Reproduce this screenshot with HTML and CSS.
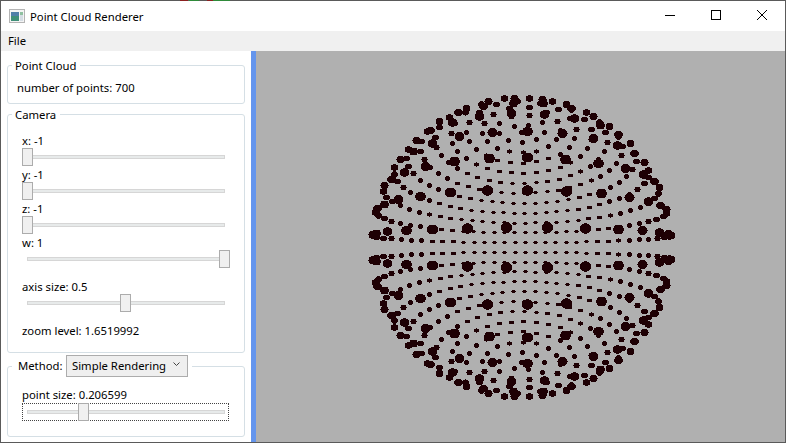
FILE: index.html
```html
<!DOCTYPE html>
<html lang="en">
<head>
    <meta charset="UTF-8">
    <title>Point Cloud Renderer</title>
    <link rel="stylesheet" href="styles.css">
</head>
<body>
    <div class="window">
        <div class="titlebar">
            <svg class="app-icon" width="16" height="14" viewBox="0 0 16 14">
                <rect x="0.5" y="0.5" width="15" height="13" fill="#f4f4f4" stroke="#b4b4b4"/>
                <rect x="2" y="3" width="8" height="9" fill="#3f8f78"/>
                <rect x="2" y="3" width="8" height="4" fill="#4f7fa8"/>
                <rect x="11" y="3" width="3" height="3" fill="#8fc0a0"/>
                <rect x="11" y="6" width="3" height="6" fill="#d5dde4"/>
            </svg>
            <span class="title">Point Cloud Renderer</span>
            <div class="caption-buttons">
                <svg width="46" height="30" viewBox="0 0 46 30"><path d="M18 14.5h10" stroke="#000" fill="none"/></svg>
                <svg width="46" height="30" viewBox="0 0 46 30"><rect x="18.5" y="9.5" width="9" height="9" stroke="#000" fill="none"/></svg>
                <svg width="46" height="30" viewBox="0 0 46 30"><path d="M18 9l10 10M28 9l-10 10" stroke="#000" fill="none"/></svg>
            </div>
        </div>
        <div class="menubar"><span>File</span></div>
        <div class="main">
            <aside class="sidebar">
                <fieldset class="group group-cloud">
                    <legend>Point Cloud</legend>
                    <div class="points-label">number of points: 700</div>
                </fieldset>
                <fieldset class="group group-camera">
                    <legend>Camera</legend>
                    <div class="label label-first">x: -1</div>
                    <div class="slider"><div class="track"></div><div class="thumb" style="left: 0px"></div></div>
                    <div class="label">y: -1</div>
                    <div class="slider"><div class="track"></div><div class="thumb" style="left: 0px"></div></div>
                    <div class="label">z: -1</div>
                    <div class="slider"><div class="track"></div><div class="thumb" style="left: 0px"></div></div>
                    <div class="label">w: 1</div>
                    <div class="slider"><div class="track"></div><div class="thumb" style="left: 197px"></div></div>
                    <div class="label label-gap">axis size: 0.5</div>
                    <div class="slider"><div class="track"></div><div class="thumb" style="left: 98px"></div></div>
                    <div class="label label-gap">zoom level: 1.6519992</div>
                </fieldset>
                <fieldset class="group group-method">
                    <legend>
                        <span class="method-label">Method:</span>
                        <span class="combo">Simple Rendering
                            <svg width="7" height="5" viewBox="0 0 7 5"><path d="M0.5 0.5l3 3 3-3" stroke="#444" fill="none"/></svg>
                        </span>
                    </legend>
                    <div class="label">point size: 0.206599</div>
                    <div class="slider focused"><div class="track"></div><div class="thumb" style="left: 56px"></div></div>
                </fieldset>
            </aside>
            <div class="splitter"></div>
            <canvas id="view" class="view" width="529" height="391"></canvas>
        </div>
    </div>
    <script src="script.js"></script>
</body>
</html>
```

FILE: styles.css
```css
* {
    box-sizing: border-box;
}
html, body {
    margin: 0;
    height: 100%;
}
body {
    font-family: "Noto Sans", Arial, sans-serif;
    font-size: 11.3px;
    color: #000;
    overflow: hidden;
}
.window {
    position: relative;
    width: 786px;
    height: 443px;
    border: 1px solid #5a5a5a;
    display: flex;
    flex-direction: column;
    background-color: #fff;
}
/* bits of the window behind showing on the top edge */
.window::before {
    content: "";
    position: absolute;
    top: -1px;
    left: 179px;
    width: 50px;
    height: 1px;
    background: linear-gradient(to right,
        #8a2020 0 8px, #5a5a5a 8px 9px, #2f8a3a 9px 19px, #5a5a5a 19px 27px,
        #8a2020 27px 33px, #2f8a3a 33px 50px);
}
.titlebar {
    height: 30px;
    display: flex;
    align-items: center;
    padding-left: 8px;
}
.app-icon {
    margin-right: 5px;
}
.caption-buttons {
    margin-left: auto;
    display: flex;
}
.caption-buttons svg {
    display: block;
}
.menubar {
    height: 20px;
    line-height: 20px;
    padding-left: 7px;
    background-color: #f0f0f0;
}
.main {
    flex: 1;
    display: flex;
    min-height: 0;
}
.sidebar {
    width: 250px;
    padding: 6px 6px 0;
}
.splitter {
    width: 5px;
    background-color: #6495ed;
}
.view {
    display: block;
    flex: 1;
    min-width: 0;
    background-color: #b0b0b0;
}
.group {
    margin: 0;
    border: 1px solid #d5dfe5;
    border-radius: 3px;
    padding: 0 14px;
    min-width: 0;
}
.group legend {
    height: 16px;
    padding: 0 4px 0 3px;
    margin-left: -10px;
    line-height: 18px;
}
.group-cloud {
    height: 47px;
}
.points-label {
    margin-left: -5px;
    line-height: 15px;
    margin-top: 7px;
}
.group-camera {
    height: 247px;
    margin-top: 2px;
}
.label {
    line-height: 15px;
    margin-top: 1px;
}
.label-first,
.label-gap {
    margin-top: 11px;
}
.slider {
    position: relative;
    height: 18px;
    width: 207px;
}
.track {
    position: absolute;
    left: 5px;
    right: 4px;
    top: 7px;
    height: 4px;
    background-color: #e7eaea;
    border: 1px solid #d6d6d6;
}
.thumb {
    position: absolute;
    top: 0;
    width: 11px;
    height: 18px;
    background-color: #f0f0f0;
    border: 1px solid #acacac;
}
.group-method {
    height: 82px;
    margin-top: 2px;
}
.group-method legend {
    display: flex;
    align-items: center;
    height: 22px;
    padding: 0 4px 0 6px;
    line-height: 22px;
}
.method-label {
    width: 45px;
}
.combo {
    display: flex;
    align-items: center;
    justify-content: space-between;
    width: 122px;
    height: 22px;
    margin-left: 3px;
    padding: 0 7px 0 5px;
    background-color: #efefef;
    border: 1px solid #acacac;
}
.combo svg {
    margin-bottom: 4px;
}
.group-method .label {
    margin-top: 10px;
    margin-bottom: 1px;
}
.focused {
    outline: 1px dotted #444;
    outline-offset: -1px;
}
```

FILE: script.js
```js
// 700 points spread evenly on a unit sphere (rings of equal spacing),
// seen in perspective from just outside, near points are drawn bigger
const canvas = document.getElementById('view');
const ctx = canvas.getContext('2d');

const centerX = 265;
const centerY = 196;
const camDist = 1.65;
const focal = 197;
const rotY = 0.05;

// scanline circle, no anti-aliasing like the original GL points
function dot(x, y, r) {
    const cx = Math.round(x);
    const cy = Math.round(y);
    const ri = Math.ceil(r);
    for (let dy = -ri; dy <= ri; dy++) {
        const half = r * r - dy * dy;
        if (half < 0) continue;
        const w = Math.round(Math.sqrt(half));
        ctx.fillRect(cx - w, cy + dy, w * 2 + 1, 1);
    }
}

function drawPoint(px, py, pz) {
    const x = px * Math.cos(rotY) + pz * Math.sin(rotY);
    const z = -px * Math.sin(rotY) + pz * Math.cos(rotY);
    const depth = camDist + z;
    dot(centerX + focal * x / depth, centerY + focal * py / depth, 0.4 + 3.19 / depth);
}

ctx.fillStyle = '#1e0004';
const area = 4 * Math.PI / 700;
const rings = 24;
const stepTheta = Math.PI / rings;
const stepPhi = area / stepTheta;
for (let m = 0; m < rings; m++) {
    const theta = Math.PI * (m + 0.5) / rings;
    const count = Math.round(2 * Math.PI * Math.sin(theta) / stepPhi);
    for (let n = 0; n < count; n++) {
        const phi = 2 * Math.PI * n / count;
        drawPoint(Math.sin(theta) * Math.sin(phi), Math.cos(theta), Math.sin(theta) * Math.cos(phi));
    }
}
```
